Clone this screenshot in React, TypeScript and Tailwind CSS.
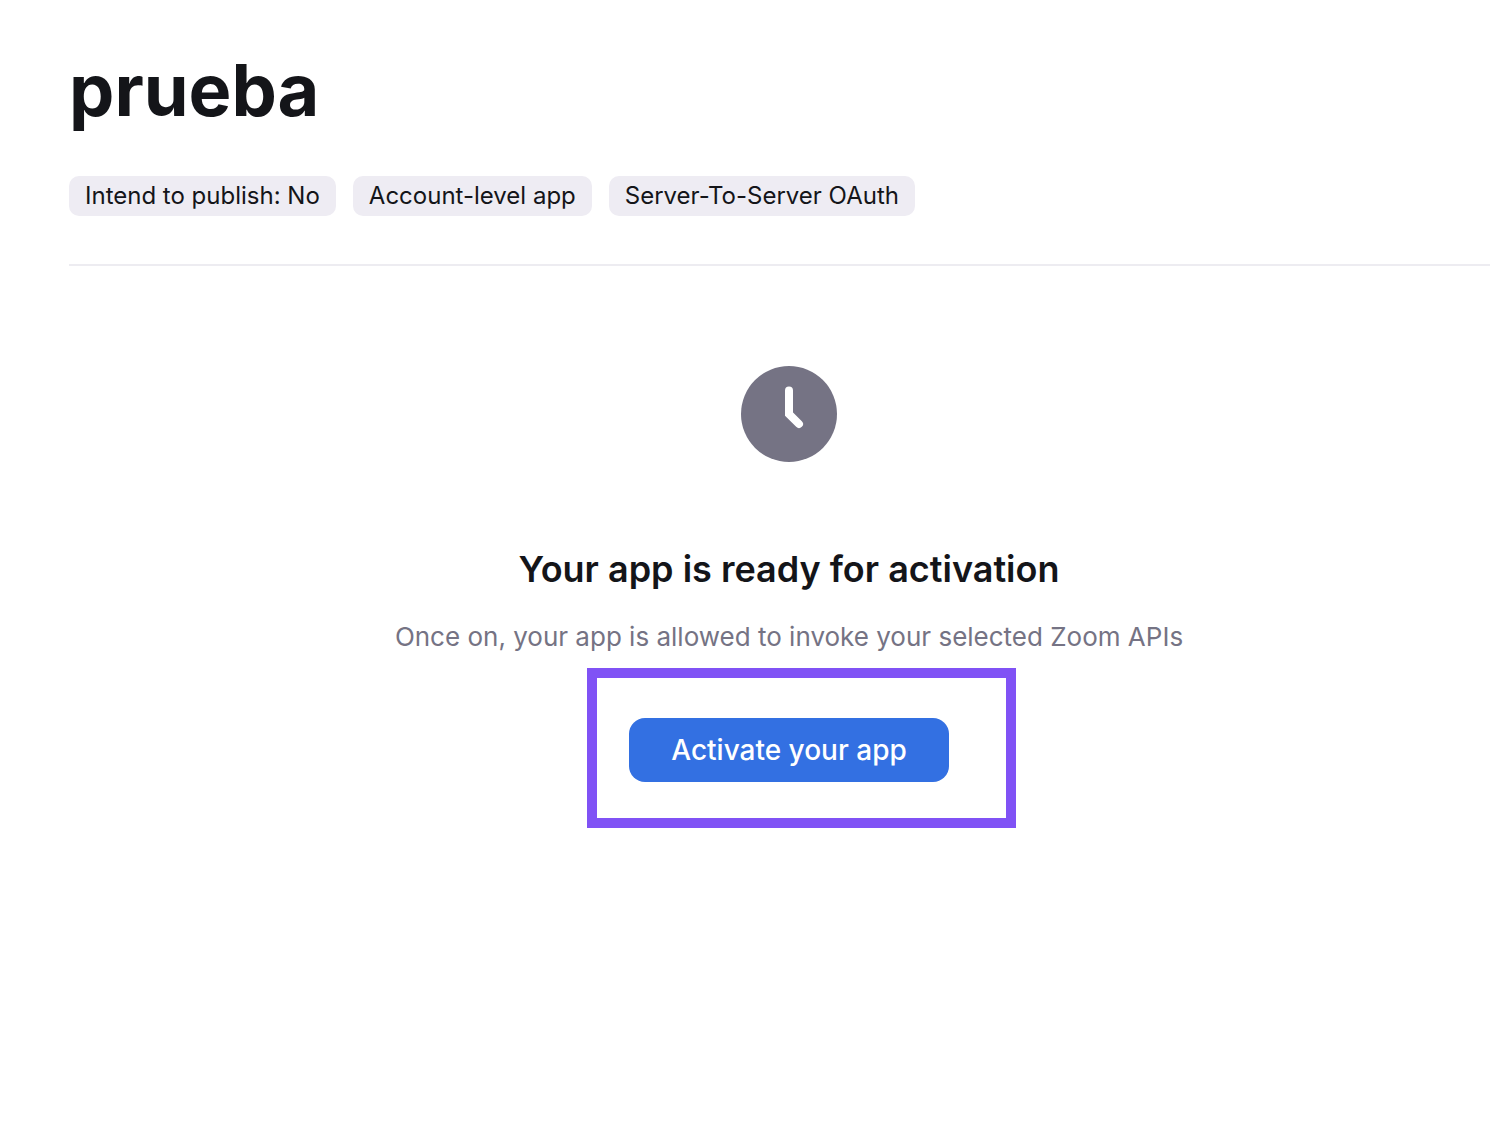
const tags = ['Intend to publish: No', 'Account-level app', 'Server-To-Server OAuth'];

function ClockIcon() {
  return (
    <svg className="size-24" viewBox="0 0 96 96" fill="none" aria-hidden="true">
      <circle cx="48" cy="48" r="48" fill="#757384" />
      <path
        d="M48 24.500V48l10 10"
        stroke="#fff"
        strokeWidth="8"
        strokeLinecap="round"
        strokeLinejoin="miter"
      />
    </svg>
  );
}

function AppHeader() {
  return (
    <header className="ml-[69px] border-b-2 border-[#edecf1] pt-[46px] pb-12">
      <h1 className="text-[72px] leading-[88px] font-bold text-[#141519]">prueba</h1>
      <ul className="mt-[42px] flex flex-wrap gap-[17px]">
        {tags.map((tag) => (
          <li
            key={tag}
            className="rounded-[10px] bg-[#eeecf3] px-4 text-[24px] leading-[40px] text-[#141519]"
          >
            {tag}
          </li>
        ))}
      </ul>
    </header>
  );
}

function ActivationPanel() {
  return (
    <section className="flex flex-col items-center pt-[100px] pl-[88px]">
      <ClockIcon />
      <h2 className="mt-[83px] text-[36px] leading-[48px] font-semibold text-[#141519]">
        Your app is ready for activation
      </h2>
      <p className="mt-6 text-[26px] leading-[40px] text-[#757384]">
        Once on, your app is allowed to invoke your selected Zoom APIs
      </p>
      <div className="relative mt-[61px]">
        <button
          type="button"
          className="h-16 w-80 rounded-2xl bg-[#3370e2] text-[28px] font-medium text-white"
        >
          Activate your app
        </button>
        {/* Highlight drawn over the button */}
        <div className="pointer-events-none absolute -top-[50px] -right-[67px] -bottom-[46px] -left-[42px] border-10 border-[#8052f5]" />
      </div>
    </section>
  );
}

export default function App() {
  return (
    <main className="min-h-screen bg-white font-['Inter',sans-serif]">
      <AppHeader />
      <ActivationPanel />
    </main>
  );
}
